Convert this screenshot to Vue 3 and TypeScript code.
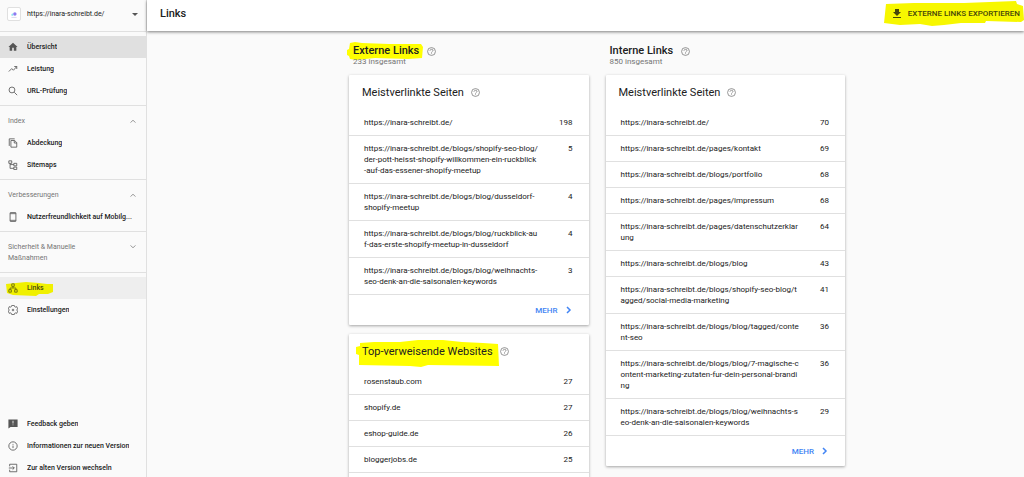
<script setup lang="ts">
import { ref } from 'vue'

interface NavItem {
  label: string
  icon: string
  state?: 'active' | 'marked'
}

interface NavSection {
  title?: string
  open?: boolean
  items: NavItem[]
}

interface Row {
  lines: string[]
  count: number
}

interface LinkCard {
  title: string
  marked?: boolean
  more?: boolean
  rows: Row[]
}

interface LinkColumn {
  title: string
  total: string
  marked?: boolean
  cards: LinkCard[]
}

const property = ref('https://inara-schreibt.de/')

const icons: Record<string, string> = {
  home: '<path fill="currentColor" stroke="none" d="M10 21v-7h4v7h6v-9h3L12 2 1 12h3v9z"/>',
  trend: '<path d="M2 18l7-7 4 4 8-9M15 6h6v6"/>',
  search: '<circle cx="9.500" cy="9.500" r="7"/><path d="M15 15l7 7"/>',
  pages: '<path d="M16 2H3v17"/><path d="M7 6h9l5 5v11H7zM15 6v6h6"/>',
  tree: '<path d="M2 2h7v6H2zM14 8h7v6h-7zM14 17h7v6h-7zM5 8v12h9M5 11h9"/>',
  phone: '<rect x="5" y="1" width="14" height="22" rx="2"/><path d="M5 4h14M5 20h14"/>',
  network: '<path d="M9 2h6v6H9zM2 16h6v6H2zM16 16h6v6h-6zM12 8v4M5 16v-4h14v4"/>',
  gear: '<path d="M9 1h6l1 3 2 1 3-1 2 5-2 3 2 3-2 5-3-1-2 1-1 3H9l-1-3-2-1-3 1-2-5 2-3-2-3 2-5 3 1 2-1z"/><circle cx="12" cy="12" r="2"/>',
  feedback: '<path fill="currentColor" stroke="none" fill-rule="evenodd" d="M1 1h22v18H6l-5 4zM11 4v7h2V4zM11 13v2h2v-2z"/>',
  info: '<circle cx="12" cy="12" r="10"/><path d="M12 11v6M12 7v2"/>',
  exit: '<path d="M4 8V3h17v18H4v-5M2 12h13M11 8l4 4-4 4"/>',
}

const sections: NavSection[] = [
  {
    items: [
      { label: 'Übersicht', icon: 'home', state: 'active' },
      { label: 'Leistung', icon: 'trend' },
      { label: 'URL-Prüfung', icon: 'search' },
    ],
  },
  {
    title: 'Index',
    open: true,
    items: [
      { label: 'Abdeckung', icon: 'pages' },
      { label: 'Sitemaps', icon: 'tree' },
    ],
  },
  {
    title: 'Verbesserungen',
    open: true,
    items: [{ label: 'Nutzerfreundlichkeit auf Mobilg...', icon: 'phone' }],
  },
  { title: 'Sicherheit & Manuelle Maßnahmen', open: false, items: [] },
  {
    items: [
      { label: 'Links', icon: 'network', state: 'marked' },
      { label: 'Einstellungen', icon: 'gear' },
    ],
  },
]

const footerItems: NavItem[] = [
  { label: 'Feedback geben', icon: 'feedback' },
  { label: 'Informationen zur neuen Version', icon: 'info' },
  { label: 'Zur alten Version wechseln', icon: 'exit' },
]

const columns: LinkColumn[] = [
  {
    title: 'Externe Links',
    total: '233 insgesamt',
    marked: true,
    cards: [
      {
        title: 'Meistverlinkte Seiten',
        more: true,
        rows: [
          { lines: ['https://inara-schreibt.de/'], count: 198 },
          {
            lines: [
              'https://inara-schreibt.de/blogs/shopify-seo-blog/',
              'der-pott-heisst-shopify-willkommen-ein-ruckblick',
              '-auf-das-essener-shopify-meetup',
            ],
            count: 5,
          },
          { lines: ['https://inara-schreibt.de/blogs/blog/dusseldorf-', 'shopify-meetup'], count: 4 },
          { lines: ['https://inara-schreibt.de/blogs/blog/ruckblick-au', 'f-das-erste-shopify-meetup-in-dusseldorf'], count: 4 },
          { lines: ['https://inara-schreibt.de/blogs/blog/weihnachts-', 'seo-denk-an-die-saisonalen-keywords'], count: 3 },
        ],
      },
      {
        title: 'Top-verweisende Websites',
        marked: true,
        rows: [
          { lines: ['rosenstaub.com'], count: 27 },
          { lines: ['shopify.de'], count: 27 },
          { lines: ['eshop-guide.de'], count: 26 },
          { lines: ['bloggerjobs.de'], count: 25 },
        ],
      },
    ],
  },
  {
    title: 'Interne Links',
    total: '850 insgesamt',
    cards: [
      {
        title: 'Meistverlinkte Seiten',
        more: true,
        rows: [
          { lines: ['https://inara-schreibt.de/'], count: 70 },
          { lines: ['https://inara-schreibt.de/pages/kontakt'], count: 69 },
          { lines: ['https://inara-schreibt.de/blogs/portfolio'], count: 68 },
          { lines: ['https://inara-schreibt.de/pages/impressum'], count: 68 },
          { lines: ['https://inara-schreibt.de/pages/datenschutzerklar', 'ung'], count: 64 },
          { lines: ['https://inara-schreibt.de/blogs/blog'], count: 43 },
          { lines: ['https://inara-schreibt.de/blogs/shopify-seo-blog/t', 'agged/social-media-marketing'], count: 41 },
          { lines: ['https://inara-schreibt.de/blogs/blog/tagged/conte', 'nt-seo'], count: 36 },
          {
            lines: [
              'https://inara-schreibt.de/blogs/blog/7-magische-c',
              'ontent-marketing-zutaten-fur-dein-personal-brandi',
              'ng',
            ],
            count: 36,
          },
          { lines: ['https://inara-schreibt.de/blogs/blog/weihnachts-s', 'eo-denk-an-die-saisonalen-keywords'], count: 29 },
        ],
      },
    ],
  },
]
</script>

<template>
  <div class="page">
    <aside class="sidebar">
      <div class="property">
        <span class="favicon">
          <svg viewBox="0 0 14 14" width="14" height="14" aria-hidden="true">
            <path d="M4 9V7l2-1v3z" fill="#8be3f0" />
            <circle cx="8" cy="7" r="2" fill="#8c7bf0" />
            <path d="M4 11h6" stroke="#d5d5ea" />
          </svg>
        </span>
        <select v-model="property" class="property-select" aria-label="Property">
          <option>https://inara-schreibt.de/</option>
        </select>
        <svg class="caret" viewBox="0 0 6 3" width="6" height="3" aria-hidden="true"><path d="M0 0h6L3 3z" fill="#555" /></svg>
      </div>

      <nav class="nav">
        <div v-for="(section, i) in sections" :key="i" class="section">
          <button v-if="section.title" class="section-title" type="button" :aria-expanded="section.open">
            <span class="section-name">{{ section.title }}</span>
            <svg viewBox="0 0 10 10" width="8" height="8" aria-hidden="true">
              <path :d="section.open ? 'M2 7l3-3 3 3' : 'M2 3l3 3 3-3'" fill="none" stroke="#777" />
            </svg>
          </button>
          <a v-for="item in section.items" :key="item.label" href="#" class="item" :class="item.state">
            <svg v-if="item.state === 'marked'" class="marker marker-nav" viewBox="0 0 47 14" width="47" height="14" aria-hidden="true">
              <path d="M0 2L10 1 20 0 33 1 41 2 47 2V10L42 12 33 12 30 14 7 13 1 11z" />
            </svg>
            <svg class="icon" viewBox="0 0 24 24" width="10" height="10" aria-hidden="true" v-html="icons[item.icon]" />
            <span class="item-label">{{ item.label }}</span>
          </a>
        </div>
      </nav>

      <div class="side-footer">
        <a v-for="item in footerItems" :key="item.label" href="#" class="item">
          <svg class="icon" viewBox="0 0 24 24" width="10" height="10" aria-hidden="true" v-html="icons[item.icon]" />
          <span class="item-label">{{ item.label }}</span>
        </a>
      </div>
    </aside>

    <div class="main">
      <header class="topbar">
        <h1>Links</h1>
        <button class="export" type="button">
          <svg class="marker marker-export" viewBox="0 0 140 25" width="140" height="25" aria-hidden="true">
            <path d="M2 3L30 2 80 2 132 0 133 3 139 5 140 19 137 21 102 20 101 22 77 22 60 24 48 25 36 23 16 24 0 22z" />
          </svg>
          <svg viewBox="0 0 10 10" width="10" height="10" aria-hidden="true">
            <path d="M3 0h4v3h2L5 7 1 3h2zM1 8h8v1H1z" fill="currentColor" />
          </svg>
          <span>EXTERNE LINKS EXPORTIEREN</span>
        </button>
      </header>

      <main class="scroller">
        <div class="columns">
          <section v-for="column in columns" :key="column.title" class="column">
            <div class="column-head">
              <h2>
                <svg v-if="column.marked" class="marker marker-column" viewBox="0 0 76 18" width="76" height="18" aria-hidden="true">
                  <path d="M3 1L8 0 15 1 42 2 74 2 76 5 75 16 61 17 28 16 9 18 3 17 2 14 0 13 0 8 2 7z" />
                </svg>
                <span>{{ column.title }}</span>
                <svg class="help" viewBox="0 0 24 24" width="9" height="9" aria-hidden="true">
                  <circle cx="12" cy="12" r="10.500" />
                  <path d="M8 10c0-5 8-5 8-1 0 3-4 3-4 6M12 17v2" />
                </svg>
              </h2>
              <p>{{ column.total }}</p>
            </div>

            <article v-for="card in column.cards" :key="card.title" class="card">
              <h3>
                <svg v-if="card.marked" class="marker marker-card" viewBox="0 0 147 27" width="147" height="27" aria-hidden="true">
                  <path d="M4 3L18 2 44 2 62 0 87 0 106 2 127 3 142 4 143 26 72 25 65 27 54 26 3 25 3 15 0 14V7L4 6z" />
                </svg>
                <span>{{ card.title }}</span>
                <svg class="help" viewBox="0 0 24 24" width="9" height="9" aria-hidden="true">
                  <circle cx="12" cy="12" r="10.500" />
                  <path d="M8 10c0-5 8-5 8-1 0 3-4 3-4 6M12 17v2" />
                </svg>
              </h3>
              <table :aria-label="card.title">
                <tbody>
                  <tr v-for="row in card.rows" :key="row.lines[0]">
                    <td class="target">{{ row.lines.join('\n') }}</td>
                    <td class="count">{{ row.count }}</td>
                  </tr>
                </tbody>
              </table>
              <div class="card-foot">
                <button v-if="card.more" class="more" type="button">
                  <span>MEHR</span>
                  <svg viewBox="0 0 8 8" width="8" height="8" aria-hidden="true"><path d="M2 1l3 3-3 3" /></svg>
                </button>
              </div>
            </article>
          </section>
        </div>
      </main>
    </div>
  </div>
</template>

<style>
body {
  margin: 0;
  background: #fafafa;
}
</style>

<style scoped>
.page {
  display: flex;
  height: 100vh;
  overflow: hidden;
  background: #fafafa;
  color: #212121;
  font-family: Roboto, "Liberation Sans", sans-serif;
  font-size: 7px;
  line-height: 11px;
}

button,
select {
  border: 0;
  padding: 0;
  background: none;
  color: inherit;
  font: inherit;
}

h1,
h2,
h3,
p {
  margin: 0;
}

.sidebar {
  display: flex;
  flex: none;
  flex-direction: column;
  box-sizing: border-box;
  width: 147px;
  border-right: 1px solid #e0e0e0;
}

.property {
  display: flex;
  flex: none;
  align-items: center;
  box-sizing: border-box;
  height: 32px;
  padding: 0 8px 3px 7px;
  border-bottom: 1px solid #e0e0e0;
}

.favicon {
  display: flex;
  box-sizing: border-box;
  width: 14px;
  height: 14px;
  border: 1px solid #e0e0e0;
  border-radius: 2px;
  background: #fff;
  align-items: center;
  justify-content: center;
}

.property-select {
  flex: 1;
  min-width: 0;
  margin-left: 6px;
  appearance: none;
}

.nav {
  flex: none;
}

.section {
  padding: 4px 0 3px;
  border-bottom: 1px solid #e0e0e0;
}

.section:last-child {
  border-bottom: 0;
}

.section-title {
  display: flex;
  align-items: flex-start;
  justify-content: space-between;
  box-sizing: border-box;
  width: 100%;
  padding: 6px 9px 5px 8px;
  color: #757575;
  text-align: left;
}

.section-title svg {
  margin-top: 1px;
}

.section-name {
  max-width: 84px;
}

.item {
  position: relative;
  isolation: isolate;
  display: flex;
  align-items: center;
  height: 22px;
  padding: 0 12px 0 8px;
  color: #212121;
  font-weight: 500;
  text-decoration: none;
}

.active {
  background: #e0e0e0;
}

.marked {
  background: #eee;
  color: #4a4a10;
}

.icon {
  flex: none;
  margin-right: 9px;
  fill: none;
  stroke: currentColor;
  stroke-width: 2;
  color: #555;
}

.marked .icon {
  color: #68680a;
}

.item-label {
  overflow: hidden;
  text-overflow: ellipsis;
  white-space: nowrap;
}

.side-footer {
  height: 64px;
  margin-top: auto;
}

.marker {
  position: absolute;
  z-index: -1;
  fill: #ff0;
}

.marker-nav {
  left: 6px;
  top: 5px;
  fill: #f0f000;
}

.main {
  display: flex;
  flex: 1;
  flex-direction: column;
  min-width: 0;
}

.topbar {
  position: relative;
  z-index: 1;
  display: flex;
  flex: none;
  align-items: center;
  justify-content: space-between;
  box-sizing: border-box;
  height: 31px;
  padding: 0 4px 4px 13px;
  background: #fff;
  box-shadow: 0 1px 3px rgba(0, 0, 0, 0.5);
}

h1 {
  font-size: 11px;
  font-weight: 500;
  line-height: 16px;
}

.export {
  position: relative;
  isolation: isolate;
  display: flex;
  align-items: center;
  gap: 6px;
  color: #46460a;
  font-size: 8px;
  font-weight: 500;
}

.marker-export {
  right: -4px;
  top: -7px;
  fill: #f7f700;
}

.scroller {
  flex: 1;
  min-height: 0;
  overflow-y: auto;
  scrollbar-width: none;
}

.columns {
  display: grid;
  grid-template-columns: 1fr 1fr;
  align-items: start;
  gap: 17px;
  max-width: 496px;
  margin: 0 auto;
  padding: 13px 0 10px 23px;
}

.column {
  display: flex;
  flex-direction: column;
  gap: 9px;
}

.column-head {
  padding-left: 4px;
}

h2,
h3 {
  position: relative;
  isolation: isolate;
  display: flex;
  align-items: center;
  font-size: 11px;
}

h2 {
  gap: 8px;
  font-weight: 500;
  line-height: 14px;
}

h3 {
  gap: 7px;
  height: 35px;
  padding-left: 13px;
  font-weight: 400;
}

.column-head p {
  position: relative;
  color: #757575;
  font-size: 8px;
  line-height: 8px;
}

.marker-column {
  left: -6px;
  top: -2px;
}

.marker-card {
  left: 7px;
  top: 6px;
}

.help {
  flex: none;
  fill: none;
  stroke: #757575;
  stroke-width: 2;
}

.card {
  border-radius: 1px;
  background: #fff;
  box-shadow: 0 1px 3px rgba(0, 0, 0, 0.35);
}

table {
  width: 100%;
  border-collapse: separate;
  border-spacing: 0;
  font-size: 8px;
}

td {
  padding: 7px 0;
  border-bottom: 1px solid #e0e0e0;
  vertical-align: top;
}

.target {
  padding-left: 15px;
  white-space: pre;
}

.count {
  padding-right: 16px;
  text-align: right;
}

.card-foot {
  display: flex;
  align-items: center;
  justify-content: flex-end;
  height: 30px;
  padding-right: 16px;
}

.more {
  display: flex;
  align-items: center;
  gap: 7px;
  color: #4285f4;
  font-size: 8px;
  font-weight: 500;
}

.more svg {
  fill: none;
  stroke: currentColor;
  stroke-width: 1.5;
}
</style>
